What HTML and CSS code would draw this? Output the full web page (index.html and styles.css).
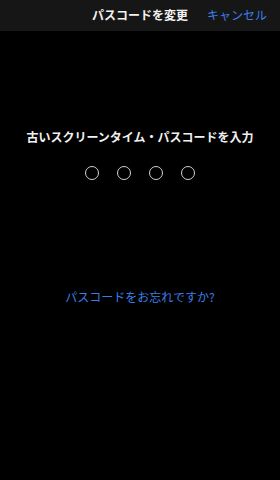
FILE: index.html
```html
<!DOCTYPE html>
<html lang="ja">
<head>
<meta charset="utf-8">
<link rel="stylesheet" href="styles.css">
</head>
<body>
<div class="screen">
  <header class="bar">
    <div class="title">パスコードを変更</div>
    <div class="cancel">キャンセル</div>
  </header>
  <main class="content">
    <div class="prompt">古いスクリーンタイム・パスコードを入力</div>
    <div class="dots">
      <span class="dot"></span>
      <span class="dot"></span>
      <span class="dot"></span>
      <span class="dot"></span>
    </div>
    <div class="forgot">パスコードをお忘れですか?</div>
  </main>
</div>
</body>
</html>
```

FILE: styles.css
```css
html, body {
  margin: 0;
  padding: 0;
  background: #000;
}
body {
  width: 280px;
  height: 480px;
  overflow: hidden;
  font-family: "Noto Sans CJK JP", "Noto Sans", sans-serif;
}
.screen {
  display: flex;
  flex-direction: column;
  height: 480px;
}
.bar {
  height: 31px;
  background: #161616;
  display: grid;
  grid-template-columns: 1fr auto 1fr;
  align-items: center;
  padding: 0 13px 2px;
  box-sizing: border-box;
}
.title {
  grid-column: 2;
  color: #f2f2f2;
  font-size: 12px;
  font-weight: 700;
  line-height: 16px;
}
.cancel {
  grid-column: 3;
  justify-self: end;
  color: #3b7fe6;
  font-size: 12px;
  line-height: 16px;
}
.content {
  display: flex;
  flex-direction: column;
  align-items: center;
}
.prompt {
  margin-top: 98px;
  color: #f0f0f0;
  font-size: 12px;
  font-weight: 700;
  line-height: 16px;
}
.dots {
  margin-top: 21px;
  display: flex;
  gap: 18px;
}
.dot {
  width: 14px;
  height: 14px;
  box-sizing: border-box;
  border: 1px solid #cfcfcf;
  border-radius: 50%;
}
.forgot {
  margin-top: 109px;
  color: #3b7fe6;
  font-size: 12px;
  line-height: 16px;
}
```
